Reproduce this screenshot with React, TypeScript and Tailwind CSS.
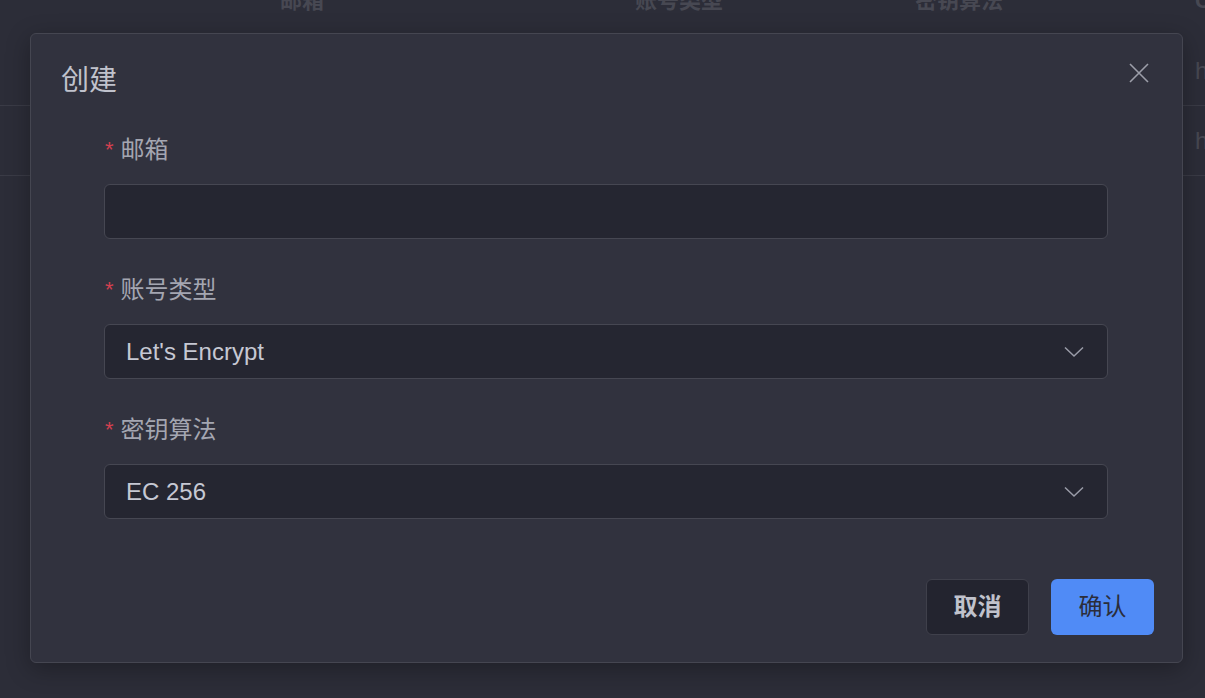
const font = { fontFamily: '"Liberation Sans", "Noto Sans CJK SC", sans-serif' };

const columns = ['邮箱', '账号类型', '密钥算法', 'C'];

function Background() {
  return (
    <div className="w-full">
      <div className="flex h-[46px] items-start text-[22px] font-bold text-[#474852] leading-none -mt-[10px]">
        <div className="w-[280px] shrink-0" />
        {columns.map((c) => (
          <div key={c} className={c === '邮箱' ? 'w-[355px] shrink-0' : c === 'C' ? 'flex-1' : 'w-[280px] shrink-0'}>
            {c}
          </div>
        ))}
      </div>
      {[0, 1].map((i) => (
        <div key={i} className="flex h-[70px] items-center border-b border-[#3a3b46] text-[24px] text-[#474852]">
          <div className="flex-1" />
          <div className="w-[10px]">h</div>
        </div>
      ))}
    </div>
  );
}

function Chevron() {
  return (
    <svg width="20" height="12" viewBox="0 0 20 12" fill="none" className="text-[#9a9ca8]">
      <path d="M1 1.5 L10 10 L19 1.5" stroke="currentColor" strokeWidth="1.5" />
    </svg>
  );
}

function Field({ label, value, select }: { label: string; value?: string; select?: boolean }) {
  return (
    <div className="flex flex-col mb-[35px]">
      <div className="flex items-center h-[32px] text-[24px] leading-[32px] text-[#a4a6b1] mb-[18px] pl-[1px]">
        <span className="text-[#d3404f] text-[22px] mr-[7px]">*</span>
        {label}
      </div>
      <div className="h-[55px] rounded-[6px] border border-[#464752] bg-[#252631] flex items-center pl-[21px] pr-[23px] justify-between">
        <span className="text-[24px] text-[#c6c8d3]">{value}</span>
        {select && <Chevron />}
      </div>
    </div>
  );
}

export default function App() {
  return (
    <div className="relative w-[1205px] h-[698px] overflow-hidden bg-[#2c2d38]" style={font}>
      <Background />
      <div className="absolute left-[30px] top-[33px] w-[1153px] h-[630px] rounded-[6px] border border-[#454651] bg-[#31323e] shadow-[0_6px_24px_rgba(0,0,0,0.3)] flex flex-col pl-[29px] pr-[28px] pt-[28px] pb-[27px]">
        <div className="flex items-start justify-between">
          <h2 className="text-[28px] leading-[38px] text-[#c0c2cc] pl-px">创建</h2>
          <button className="mt-[1px] mr-[5px] text-[#9c9ea9]">
            <svg width="20" height="20" viewBox="0 0 20 20" fill="none">
              <path d="M1 1 L19 19 M19 1 L1 19" stroke="currentColor" strokeWidth="1.6" />
            </svg>
          </button>
        </div>
        <div className="flex flex-col pl-[44px] pr-[46px] mt-[34px]">
          <Field label="邮箱" value="" />
          <Field label="账号类型" value="Let's Encrypt" select />
          <Field label="密钥算法" value="EC 256" select />
        </div>
        <div className="mt-auto flex justify-end gap-[22px]">
          <button className="w-[103px] h-[56px] rounded-[6px] border border-[#3f404b] bg-[#23242f] text-[24px] font-bold text-[#c0c2cc]">取消</button>
          <button className="w-[103px] h-[56px] rounded-[6px] bg-[#508bf6] text-[24px] text-[#2b2d3a]">确认</button>
        </div>
      </div>
    </div>
  );
}
